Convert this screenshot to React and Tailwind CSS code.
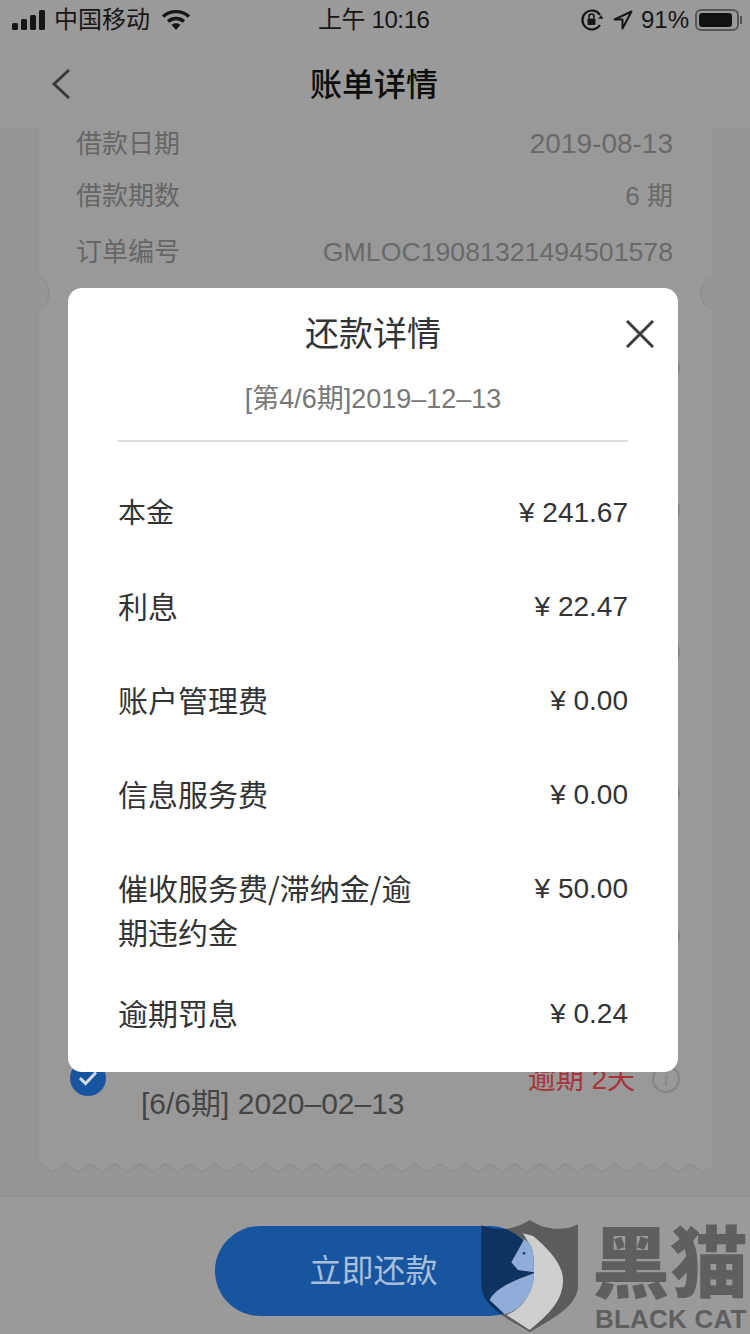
import React from 'react';

const fees = [
    { label: '本金', value: '¥ 241.67', size: 'text-[28px]' },
    { label: '利息', value: '¥ 22.47', size: 'text-[30px]' },
    { label: '账户管理费', value: '¥ 0.00', size: 'text-[30px]' },
    { label: '信息服务费', value: '¥ 0.00', size: 'text-[30px]' },
    { label: '催收服务费/滞纳金/逾期违约金', value: '¥ 50.00', size: 'text-[30px]' },
    { label: '逾期罚息', value: '¥ 0.24', size: 'text-[30px]' },
];

const loanInfo = [
    { label: '借款日期', value: '2019-08-13', size: 'text-[28px]', className: 'h-[32px]' },
    { label: '借款期数', value: '6 期', size: 'text-[26px]', className: 'h-[32px] mt-[20px]' },
    { label: '订单编号', value: 'GMLOC19081321494501578', size: 'text-[26.7px]', className: 'h-[32px] mt-[24px]' },
];

const hiddenRows = [1, 2, 3, 4, 5];

const InfoIcon = () => (
    <div className="w-[28px] h-[28px] rounded-full border-2 border-[#858585] flex items-center justify-center text-[18px] italic text-[#858585] font-['Liberation_Serif',serif]">
        i
    </div>
);

const StatusBar = () => (
    <div className="h-[40px] flex items-center justify-between pl-[12px] pr-[8px] text-[#161616] text-[24px] relative">
        <div className="flex items-center">
            <svg width="34" height="20" viewBox="0 0 34 20" fill="#161616">
                <rect x="0" y="13" width="6" height="7" rx="1.5" />
                <rect x="9" y="9" width="6" height="11" rx="1.5" />
                <rect x="18" y="5" width="6" height="15" rx="1.5" />
                <rect x="27" y="0" width="6" height="20" rx="1.5" />
            </svg>
            <span className="ml-[8px] leading-none">中国移动</span>
            <svg className="ml-[11px]" width="30" height="22" viewBox="0 0 30 22" fill="none" stroke="#161616" strokeWidth="3.4">
                <path d="M2 7.5C9.5 1 20.5 1 28 7.5" />
                <path d="M7 12.5C11.5 8.5 18.5 8.5 23 12.5" />
                <path d="M15 21l-4.6-5.2C13 13.6 17 13.6 19.6 15.8z" fill="#161616" stroke="none" />
            </svg>
        </div>
        <div className="absolute left-[318px] top-0 h-[40px] flex items-center leading-none tracking-[-0.4px]">
            上午 10:16
        </div>
        <div className="flex items-center">
            <svg width="24" height="26" viewBox="0 0 24 26" fill="none" stroke="#161616" strokeWidth="2.2">
                <path d="M20 8A9.5 9.5 0 1 0 20 18" />
                <path d="M18 11.5l3.5-3.5 1.5 4z" fill="#161616" stroke="none" />
                <rect x="7.5" y="11.5" width="8" height="6.5" rx="1" fill="#161616" stroke="none" />
                <path d="M9 11.5V9.5a2.5 2.5 0 0 1 5 0v2" strokeWidth="1.6" />
            </svg>
            <svg className="ml-[9px]" width="20" height="20" viewBox="0 0 20 20" fill="none" stroke="#161616" strokeWidth="2">
                <path d="M18.5 1.5L1.5 9.5h8v9z" strokeLinejoin="round" />
            </svg>
            <span className="ml-[8px] leading-none">91%</span>
            <div className="ml-[6px] flex items-center">
                <div className="w-[44px] h-[22px] rounded-[6px] border-2 border-[#555] p-[2px]">
                    <div className="w-[33px] h-full rounded-[3px] bg-[#111]" />
                </div>
                <div className="w-[2px] h-[8px] bg-[#555] ml-[1px]" />
            </div>
        </div>
    </div>
);

const Watermark = () => (
    <>
        <svg
            className="absolute left-[460px] top-[1200px] w-[290px] h-[134px]"
            viewBox="0 0 870 402"
        >
            <path
                d="M64 75C110 95 165 90 209 60C255 90 310 95 354 73L354 255C354 315 290 350 209 396C130 350 64 315 64 255Z"
                fill="#000"
                fillOpacity="0.4"
            />
            <path
                d="M189 100L219 108C270 150 309 195 309 240C309 300 270 340 209 390L139 345C184 330 224 275 222 215C222 170 220 140 204 125Z"
                fill="#cfcfcf"
            />
            <path
                d="M186 130L154 187L174 210L222 217C222 170 220 140 204 125L192 118Z"
                fill="#8fadd6"
            />
            <path
                d="M222 220C164 240 104 265 89 300L134 343C184 330 224 275 222 220Z"
                fill="#8fadd6"
            />
            <circle cx="192" cy="160" r="4" fill="#1c3a68" />
        </svg>
        <div className="absolute left-[592px] top-[1227px] text-[78px] leading-[76px] font-black text-[#5f5f5f] whitespace-nowrap">
            黑猫
        </div>
        <div className="absolute left-[595px] top-[1304px] text-[26px] leading-[30px] font-bold tracking-[0.2px] text-[#5f5f5f] whitespace-nowrap">
            BLACK CAT
        </div>
    </>
);

const App = () => {
    const zigzag = Array.from({ length: 27 }, (_, i) => `${3 + i * 25},2 ${15.5 + i * 25},10`).join(' ');

    return (
        <div className="relative w-[750px] h-[1334px] overflow-hidden flex flex-col bg-[#969696] font-['Liberation_Sans','Noto_Sans_CJK_SC',sans-serif]">
            <header className="h-[128px] shrink-0 bg-[#9a9a9a] relative z-10">
                <StatusBar />
                <div className="h-[88px] flex items-center justify-center relative">
                    <svg className="absolute left-[50px] top-[28px]" width="22" height="32" viewBox="0 0 22 32" fill="none" stroke="#3a3a3a" strokeWidth="3">
                        <path d="M19 2L4 16l15 14" />
                    </svg>
                    <h1 className="text-[32px] font-medium text-[#0d0d0d] leading-none pt-[2px] pr-[2px]">账单详情</h1>
                </div>
            </header>

            <main className="flex-1 px-[37px] overflow-hidden">
                <div className="relative h-[1034px] bg-[#999999] border-x border-[#929292]">
                    <div className="pl-[38px] pr-[39px]">
                        {loanInfo.map((row) => (
                            <div key={row.label} className={`flex items-center justify-between ${row.className}`}>
                                <span className="text-[26px] text-[#666666]">{row.label}</span>
                                <span className={`${row.size} text-[#696969]`}>{row.value}</span>
                            </div>
                        ))}
                    </div>
                    <div className="absolute -left-[24px] top-[147px] w-[36px] h-[36px] rounded-full bg-[#969696] border-r-2 border-[#8f8f8f]" />
                    <div className="absolute -right-[24px] top-[147px] w-[36px] h-[36px] rounded-full bg-[#969696] border-l-2 border-[#8f8f8f]" />

                    <div className="mt-[29px] pr-[32px]">
                        {hiddenRows.map((row) => (
                            <div key={row} className="h-[142px] flex items-center justify-end">
                                <InfoIcon />
                            </div>
                        ))}
                        <div className="relative h-[142px] pt-[53px] pl-[32px]">
                            <div className="flex items-center">
                                <div className="w-[36px] h-[36px] rounded-full bg-[#1855a0] flex items-center justify-center">
                                    <svg width="22" height="16" viewBox="0 0 22 16" fill="none" stroke="#d3dbe6" strokeWidth="3">
                                        <path d="M3 8l5.5 5.5L19 2.5" />
                                    </svg>
                                </div>
                                <span className="ml-auto pt-[3px] text-[28px] text-[#a8343a] leading-none">逾期 2天</span>
                                <div className="ml-[17px] pt-[2px]">
                                    <InfoIcon />
                                </div>
                            </div>
                            <div className="ml-[71px] -mt-[12px] text-[30px] leading-[40px] text-[#454545] whitespace-nowrap">
                                [6/6期] 2020–02–13
                            </div>
                        </div>
                    </div>
                </div>
                <svg className="block" width="676" height="12" viewBox="0 0 676 12">
                    <polygon points={`0,0 ${zigzag} 676,2 676,0`} fill="#999999" />
                    <polyline points={zigzag} fill="none" stroke="#909090" strokeWidth="2" />
                </svg>
            </main>

            <footer className="h-[139px] shrink-0 bg-[#9a9a9a] border-t-2 border-[#919191] flex justify-center pt-[29px]">
                <button className="w-[320px] h-[90px] rounded-full bg-[#1855a0] text-[32px] text-[#a9bedb] pr-[3px]">
                    立即还款
                </button>
            </footer>

            {/* modal */}
            <div className="absolute left-[68px] top-[288px] w-[610px] h-[784px] bg-white rounded-[14px] px-[50px] z-20">
                <div className="absolute right-[24px] top-[32px]">
                    <svg width="28" height="28" viewBox="0 0 28 28" fill="none" stroke="#3d3d3d" strokeWidth="3">
                        <path d="M1 1l26 26M27 1L1 27" />
                    </svg>
                </div>
                <h2 className="pt-[24px] text-center text-[34px] leading-[44px] text-[#333]">还款详情</h2>
                <p className="mt-[23px] text-center text-[27px] leading-[40px] text-[#777]">[第4/6期]2019–12–13</p>
                <div className="mt-[21px] h-[2px] bg-[#dddddd]" />
                <div className="mt-[49px] flex flex-col gap-[50px]">
                    {fees.map((fee, index) => (
                        <div
                            key={fee.label}
                            className={`flex justify-between text-[#333] ${index === 5 ? '-mt-[11px]' : ''}`}
                        >
                            <span className={`w-[306px] -mt-[2px] leading-[44px] font-['Noto_Sans_CJK_SC',sans-serif] ${fee.size}`}>{fee.label}</span>
                            <span className="text-[28px] leading-[44px]">{fee.value}</span>
                        </div>
                    ))}
                </div>
            </div>

            <div className="absolute inset-0 z-30 pointer-events-none">
                <Watermark />
            </div>
        </div>
    );
};

export default App;
